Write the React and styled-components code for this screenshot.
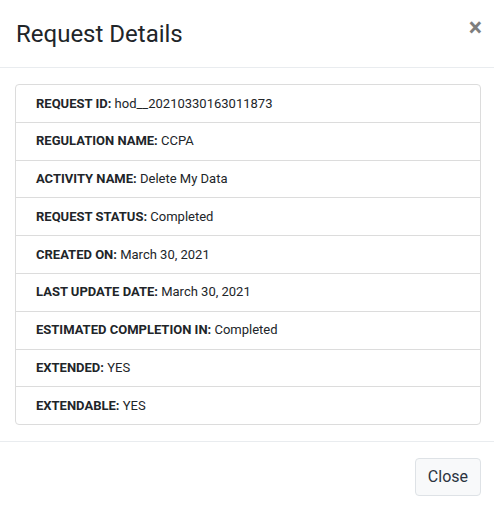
import React from "react";
import styled, { createGlobalStyle } from "styled-components";

const Global = createGlobalStyle`
  html, body { margin: 0; padding: 0; background: #fff; }
  body { font-family: Roboto, "Liberation Sans", Arial, sans-serif; color: #212529; }
  * { box-sizing: border-box; }
`;

const Modal = styled.div`
  width: 494px;
  background: #fff;
  display: flex;
  flex-direction: column;
`;

const Header = styled.div`
  display: flex;
  justify-content: space-between;
  align-items: flex-start;
  padding: 16px 12px 15px 16px;
  border-bottom: 1px solid #e9ecef;
`;

const Title = styled.h5`
  margin: 0;
  font-size: 24px;
  font-weight: 400;
  line-height: 36px;
  color: #212529;
`;

const CloseX = styled.button`
  border: 0;
  background: transparent;
  padding: 0;
  margin: 0;
  font-family: Roboto, "Liberation Sans", Arial, sans-serif;
  font-size: 25px;
  font-weight: 700;
  line-height: 24px;
  color: #000;
  opacity: 0.5;
  text-shadow: 0 1px 0 #fff;
  cursor: pointer;
`;

const Body = styled.div`
  padding: 16px 13px 16px 15px;
`;

const List = styled.ul`
  list-style: none;
  margin: 0;
  padding: 0;
  border: 1px solid #dcdcdc;
  border-radius: 4px;
`;

const Item = styled.li`
  padding: 8.5px 20px;
  font-size: 13px;
  line-height: 19.8px;
  color: #212529;
  & + & {
    border-top: 1px solid #dcdcdc;
  }
`;

const Label = styled.strong`
  font-weight: 700;
`;

const Footer = styled.div`
  display: flex;
  justify-content: flex-end;
  padding: 16px 13px 15px 16px;
  border-top: 1px solid #e9ecef;
`;

const Button = styled.button`
  font-family: Roboto, "Liberation Sans", Arial, sans-serif;
  font-size: 16px;
  line-height: 24px;
  padding: 6px 12px;
  color: #2b3440;
  background: #f8f9fa;
  border: 1px solid #dee2e6;
  border-radius: 4px;
  cursor: pointer;
`;

const rows = [
  ["REQUEST ID:", "hod__20210330163011873"],
  ["REGULATION NAME:", "CCPA"],
  ["ACTIVITY NAME:", "Delete My Data"],
  ["REQUEST STATUS:", "Completed"],
  ["CREATED ON:", "March 30, 2021"],
  ["LAST UPDATE DATE:", "March 30, 2021"],
  ["ESTIMATED COMPLETION IN:", "Completed"],
  ["EXTENDED:", "YES"],
  ["EXTENDABLE:", "YES"],
];

export default function App() {
  return (
    <>
      <Global />
      <Modal>
        <Header>
          <Title>Request Details</Title>
          <CloseX aria-label="Close">×</CloseX>
        </Header>
        <Body>
          <List>
            {rows.map(([k, v]) => (
              <Item key={k}>
                <Label>{k}</Label> {v}
              </Item>
            ))}
          </List>
        </Body>
        <Footer>
          <Button>Close</Button>
        </Footer>
      </Modal>
    </>
  );
}
